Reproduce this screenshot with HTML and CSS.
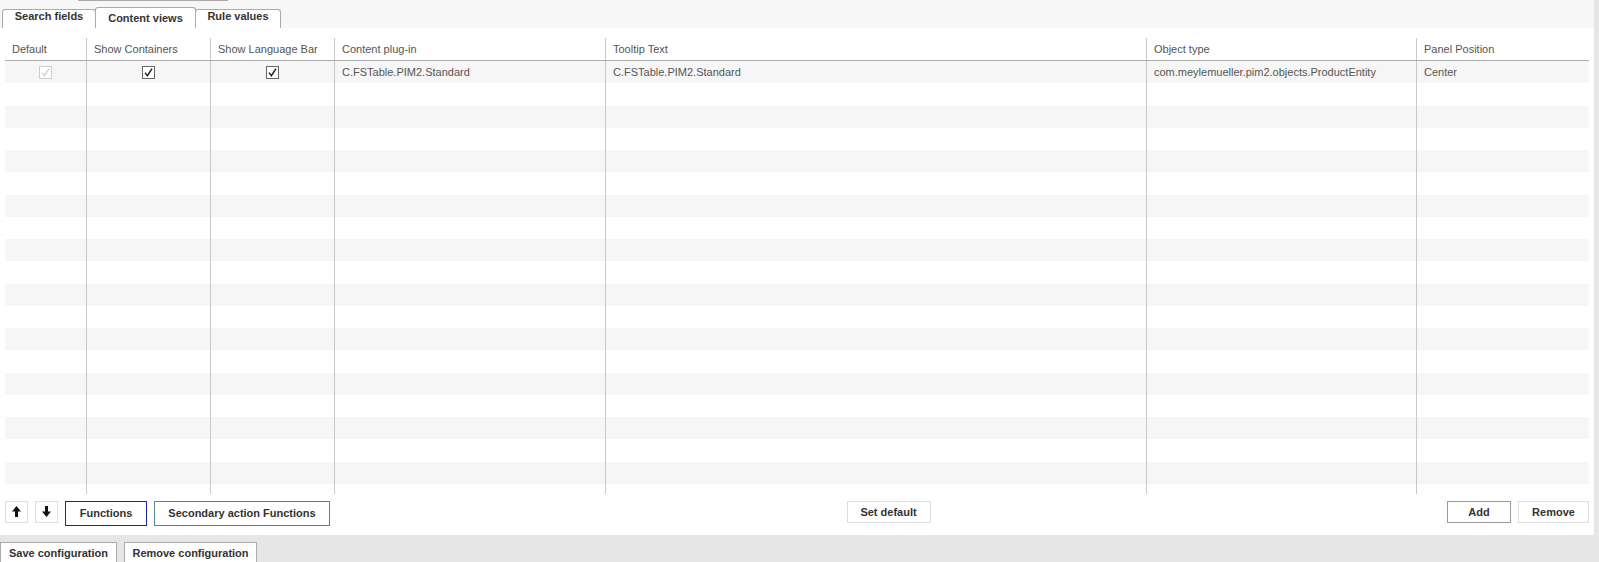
FILE: index.html
```html
<!DOCTYPE html>
<html lang="en">
<head>
  <meta charset="UTF-8">
  <title>Content views</title>
  <link rel="stylesheet" href="styles.css">
</head>
<body>
  <div class="page">
    <div class="topbar">
      <div class="cutoff"></div>
      <div class="tabs">
        <div class="tab tab-search">Search fields</div>
        <div class="tab tab-content active">Content views</div>
        <div class="tab tab-rules">Rule values</div>
      </div>
    </div>

    <div class="panel">
      <div class="grid">
        <div class="row head">
          <div class="cell">Default</div>
          <div class="cell">Show Containers</div>
          <div class="cell">Show Language Bar</div>
          <div class="cell">Content plug-in</div>
          <div class="cell">Tooltip Text</div>
          <div class="cell">Object type</div>
          <div class="cell">Panel Position</div>
        </div>
        <div class="row">
          <div class="cell check">
            <svg width="13" height="13" viewBox="0 0 13 13"><rect x="0.5" y="0.5" width="12" height="12" fill="#fff" stroke="#cfcfcf"/><path d="M3 6.6 L5.4 9.6 L10 2.6" fill="none" stroke="#cfcfcf" stroke-width="1.3"/></svg>
          </div>
          <div class="cell check">
            <svg width="13" height="13" viewBox="0 0 13 13"><rect x="0.5" y="0.5" width="12" height="12" fill="#fff" stroke="#666"/><path d="M3 6.6 L5.4 9.6 L10 2.6" fill="none" stroke="#222" stroke-width="1.5"/></svg>
          </div>
          <div class="cell check">
            <svg width="13" height="13" viewBox="0 0 13 13"><rect x="0.5" y="0.5" width="12" height="12" fill="#fff" stroke="#666"/><path d="M3 6.6 L5.4 9.6 L10 2.6" fill="none" stroke="#222" stroke-width="1.5"/></svg>
          </div>
          <div class="cell">C.FSTable.PIM2.Standard</div>
          <div class="cell">C.FSTable.PIM2.Standard</div>
          <div class="cell">com.meylemueller.pim2.objects.ProductEntity</div>
          <div class="cell">Center</div>
        </div>
        <div class="row"><div class="cell"></div><div class="cell"></div><div class="cell"></div><div class="cell"></div><div class="cell"></div><div class="cell"></div><div class="cell"></div></div>
        <div class="row"><div class="cell"></div><div class="cell"></div><div class="cell"></div><div class="cell"></div><div class="cell"></div><div class="cell"></div><div class="cell"></div></div>
        <div class="row"><div class="cell"></div><div class="cell"></div><div class="cell"></div><div class="cell"></div><div class="cell"></div><div class="cell"></div><div class="cell"></div></div>
        <div class="row"><div class="cell"></div><div class="cell"></div><div class="cell"></div><div class="cell"></div><div class="cell"></div><div class="cell"></div><div class="cell"></div></div>
        <div class="row"><div class="cell"></div><div class="cell"></div><div class="cell"></div><div class="cell"></div><div class="cell"></div><div class="cell"></div><div class="cell"></div></div>
        <div class="row"><div class="cell"></div><div class="cell"></div><div class="cell"></div><div class="cell"></div><div class="cell"></div><div class="cell"></div><div class="cell"></div></div>
        <div class="row"><div class="cell"></div><div class="cell"></div><div class="cell"></div><div class="cell"></div><div class="cell"></div><div class="cell"></div><div class="cell"></div></div>
        <div class="row"><div class="cell"></div><div class="cell"></div><div class="cell"></div><div class="cell"></div><div class="cell"></div><div class="cell"></div><div class="cell"></div></div>
        <div class="row"><div class="cell"></div><div class="cell"></div><div class="cell"></div><div class="cell"></div><div class="cell"></div><div class="cell"></div><div class="cell"></div></div>
        <div class="row"><div class="cell"></div><div class="cell"></div><div class="cell"></div><div class="cell"></div><div class="cell"></div><div class="cell"></div><div class="cell"></div></div>
        <div class="row"><div class="cell"></div><div class="cell"></div><div class="cell"></div><div class="cell"></div><div class="cell"></div><div class="cell"></div><div class="cell"></div></div>
        <div class="row"><div class="cell"></div><div class="cell"></div><div class="cell"></div><div class="cell"></div><div class="cell"></div><div class="cell"></div><div class="cell"></div></div>
        <div class="row"><div class="cell"></div><div class="cell"></div><div class="cell"></div><div class="cell"></div><div class="cell"></div><div class="cell"></div><div class="cell"></div></div>
        <div class="row"><div class="cell"></div><div class="cell"></div><div class="cell"></div><div class="cell"></div><div class="cell"></div><div class="cell"></div><div class="cell"></div></div>
        <div class="row"><div class="cell"></div><div class="cell"></div><div class="cell"></div><div class="cell"></div><div class="cell"></div><div class="cell"></div><div class="cell"></div></div>
        <div class="row"><div class="cell"></div><div class="cell"></div><div class="cell"></div><div class="cell"></div><div class="cell"></div><div class="cell"></div><div class="cell"></div></div>
        <div class="row"><div class="cell"></div><div class="cell"></div><div class="cell"></div><div class="cell"></div><div class="cell"></div><div class="cell"></div><div class="cell"></div></div>
        <div class="row"><div class="cell"></div><div class="cell"></div><div class="cell"></div><div class="cell"></div><div class="cell"></div><div class="cell"></div><div class="cell"></div></div>
        <div class="row filler"><div class="cell"></div><div class="cell"></div><div class="cell"></div><div class="cell"></div><div class="cell"></div><div class="cell"></div><div class="cell"></div></div>
      </div>

      <div class="toolbar">
        <div class="group">
          <button class="btn arrow-btn" title="Move up">
            <svg width="9" height="11" viewBox="0 0 9 11"><polygon points="4.5,0 9,5.5 6,5.5 6,11 3,11 3,5.5 0,5.5" fill="#111"/></svg>
          </button>
          <button class="btn arrow-btn" title="Move down">
            <svg width="9" height="11" viewBox="0 0 9 11"><polygon points="4.5,11 9,5.5 6,5.5 6,0 3,0 3,5.5 0,5.5" fill="#111"/></svg>
          </button>
          <button class="btn functions-btn">Functions</button>
          <button class="btn secondary-btn">Secondary action Functions</button>
        </div>
        <div class="middle">
          <button class="btn default-btn">Set default</button>
        </div>
        <div class="group">
          <button class="btn add-btn">Add</button>
          <button class="btn remove-btn">Remove</button>
        </div>
      </div>
    </div>

    <div class="footer">
      <button class="btn save-config">Save configuration</button>
      <button class="btn remove-config">Remove configuration</button>
    </div>
  </div>
</body>
</html>
```

FILE: styles.css
```css
html, body {
  overflow: hidden;
}

body {
  margin: 0;
  background: #e6e6e6;
  font-family: "Liberation Sans", Arial, Helvetica, sans-serif;
  font-size: 11px;
  color: #555;
}

.page {
  width: 1594px;
}

/* tabs */
.topbar {
  height: 28px;
  background: #f7f7f7;
  display: flex;
  flex-direction: column;
}

.cutoff {
  margin-left: 78px;
  width: 150px;
  height: 1px;
  background: #aaa;
}

.tabs {
  margin-top: auto;
  display: flex;
  align-items: flex-end;
  padding-left: 2px;
}

.tab {
  box-sizing: border-box;
  height: 19px;
  line-height: 13px;
  border: 1px solid #aaa;
  border-bottom: 0;
  border-radius: 3px 3px 0 0;
  margin-right: -1px;
  background: #fff;
  color: #333;
  font-weight: bold;
  text-align: center;
}

.tab.active {
  height: 21px;
  line-height: 20px;
}

.tab-search { width: 94px; }
.tab-content { width: 101px; }
.tab-rules { width: 86px; }

/* table */
.panel {
  background: #fff;
  padding: 10px 5px 0;
}

.row {
  display: grid;
  grid-template-columns: 81px 124px 124px 271px 541px 270px 173px;
  height: 22.26px;
}

.row:nth-child(even) {
  background: #f6f6f6;
}

.row.head {
  height: 22px;
  border-bottom: 1px solid #aaa;
  background: none;
}

.row.filler {
  height: 10px;
  background: none;
}

.cell {
  box-sizing: border-box;
  padding-left: 7px;
  border-left: 1px solid #c8c8c8;
  line-height: 22px;
  white-space: nowrap;
  overflow: hidden;
}

.cell:first-child {
  border-left: 0;
}

.cell.check {
  padding: 0;
  display: flex;
  align-items: center;
  justify-content: center;
}

.cell.check svg {
  display: block;
}

/* buttons */
.toolbar {
  box-sizing: border-box;
  height: 41px;
  padding-top: 7px;
  display: flex;
  align-items: flex-start;
}

.group {
  display: flex;
  gap: 7px;
}

.middle {
  flex: 1;
  display: flex;
  justify-content: center;
}

.btn {
  box-sizing: border-box;
  height: 22px;
  margin: 0;
  padding: 0;
  border: 1px solid #ddd;
  border-radius: 0;
  background: #fff;
  color: #333;
  font-family: "Liberation Sans", Arial, Helvetica, sans-serif;
  font-size: 11px;
  font-weight: bold;
  cursor: pointer;
}

.arrow-btn {
  width: 23px;
  display: flex;
  align-items: center;
  justify-content: center;
}

.functions-btn {
  width: 82px;
  height: 25px;
  border-color: #1c1cd6;
}

.secondary-btn {
  width: 176px;
  height: 25px;
  border-color: #4e8a8a;
}

.default-btn {
  width: 84px;
}

.add-btn {
  width: 64px;
  border-color: #9a9a9a;
}

.remove-btn {
  width: 71px;
}

.footer {
  box-sizing: border-box;
  height: 27px;
  padding-top: 7px;
  overflow: hidden;
  display: flex;
  gap: 7px;
}

.footer .btn {
  border-color: #aaa;
}

.save-config {
  width: 117px;
}

.remove-config {
  width: 133px;
}
```
